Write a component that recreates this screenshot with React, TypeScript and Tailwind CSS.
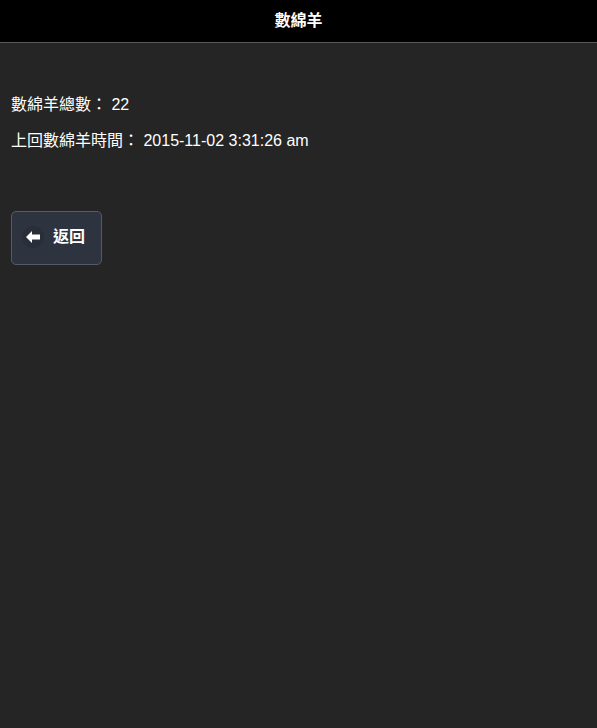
export default function App() {
  return (
    <div
      className="min-h-[728px] bg-[#252525] text-white"
      style={{ fontFamily: '"Liberation Sans", Arial, "Noto Sans CJK TC", sans-serif' }}
    >
      <header className="h-[43px] bg-black border-b border-[#5a5a5a] flex items-center justify-center">
        <h1 className="text-[16px] font-bold leading-none">數綿羊</h1>
      </header>

      <div className="px-[11px] pt-[53px]">
        <p className="text-[16px] leading-[18px]">數綿羊總數： 22</p>
        <p className="text-[16px] leading-[18px] mt-[18px]">上回數綿羊時間： 2015-11-02 3:31:26 am</p>

        <button className="mt-[61px] w-[91px] h-[54px] flex items-center gap-[9px] pl-[10px] pb-[2px] rounded-[5px] border border-[#555b66] bg-[#2e3340] text-[16px] font-bold">
          <span className="w-[22px] h-[22px] rounded-full bg-[#2a2e38] flex items-center justify-center">
            <svg width="14" height="12" viewBox="0 0 14 12">
              <path d="M0 6 L6 0 L6 3.5 L14 3.5 L14 8.5 L6 8.5 L6 12 Z" fill="white" />
            </svg>
          </span>
          <span>返回</span>
        </button>
      </div>
    </div>
  );
}
